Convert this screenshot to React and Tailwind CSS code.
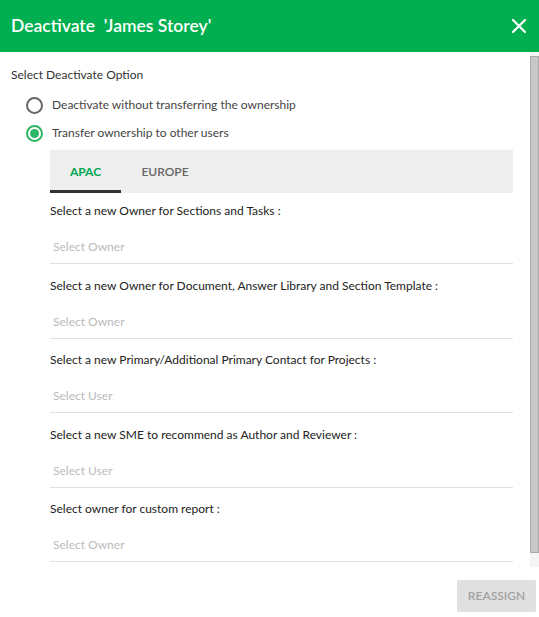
export default function App() {
  const sections = [
    ["Select a new Owner for Sections and Tasks :", "Select Owner"],
    ["Select a new Owner for Document, Answer Library and Section Template :", "Select Owner"],
    ["Select a new Primary/Additional Primary Contact for Projects :", "Select User"],
    ["Select a new SME to recommend as Author and Reviewer :", "Select User"],
    ["Select owner for custom report :", "Select Owner"],
  ];
  return (
    <div className="w-[539px] h-[617px] bg-white flex flex-col overflow-hidden" style={{ fontFamily: "Lato, 'Noto Sans', sans-serif" }}>
      <div className="h-[52px] bg-[#00b050] flex items-center justify-between pl-[11px] pr-[13px] shrink-0">
        <div className="text-white text-[17.5px] font-semibold whitespace-pre">Deactivate  'James Storey'</div>
        <svg width="14" height="14" viewBox="0 0 14 14"><path d="M1 1L13 13M13 1L1 13" stroke="white" strokeWidth="2.2" strokeLinecap="round" /></svg>
      </div>
      <div className="flex h-[515px] shrink-0">
        <div className="flex-1 pl-[11px] pr-[17px] pt-[15px]">
          <div className="text-[12px] text-[#333] leading-[16px]">Select Deactivate Option</div>
          <div className="pl-[15px] mt-[8px]">
            <div className="flex items-center h-[28px] gap-[9px]">
              <span className="w-[17px] h-[17px] rounded-full border-2 border-[#666]" />
              <span className="text-[12px] text-[#444]">Deactivate without transferring the ownership</span>
            </div>
            <div className="flex items-center h-[28px] gap-[9px]">
              <span className="w-[17px] h-[17px] rounded-full border-2 border-[#2cb765] flex items-center justify-center">
                <span className="w-[9px] h-[9px] rounded-full bg-[#2cb765]" />
              </span>
              <span className="text-[12px] text-[#444]">Transfer ownership to other users</span>
            </div>
          </div>
          <div className="pl-[39px] mt-[3px]">
            <div className="h-[43px] bg-[#eeeeee] flex">
              <div className="w-[71px] flex items-center justify-center border-b-[3px] border-[#333] pt-[3px] text-[12px] font-bold text-[#00a651]">APAC</div>
              <div className="w-[88px] flex items-center justify-center text-[12px] font-semibold text-[#666]">EUROPE</div>
            </div>
            {sections.map(([label, ph], i) => (
              <div key={i} className={`border-b border-[#e0e0e0] flex flex-col pb-[8px] ${i === 0 ? "pt-[10px]" : "pt-[13.5px]"}`}>
                <div className="text-[12px] text-[#222] leading-[16px]">{label}</div>
                <div className="text-[12px] text-[#bbb] mt-[20px] pl-[3px] leading-[16px]">{ph}</div>
              </div>
            ))}
          </div>
        </div>
        <div className="w-[9px] bg-[#f4f4f4] pt-[4px] pb-[14px] flex">
          <div className="w-full h-full bg-[#c8c8c8] border border-[#aaa]" />
        </div>
      </div>
      <div className="flex justify-end pr-[3px] pt-[13px]">
        <div className="w-[79px] h-[32px] bg-[#e0e0e0] rounded-[2px] flex items-center justify-center text-[12px] text-[#a0a0a0] font-semibold">REASSIGN</div>
      </div>
    </div>
  );
}
